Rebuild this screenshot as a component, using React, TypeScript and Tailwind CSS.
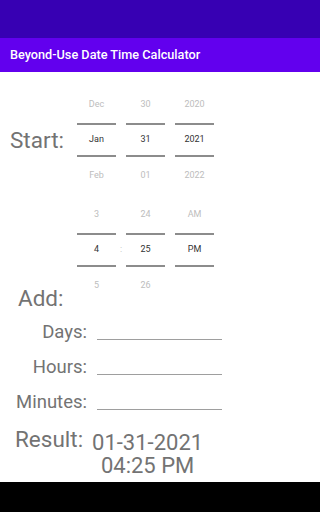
const DATE_COLS = [
  ['Dec', 'Jan', 'Feb'],
  ['30', '31', '01'],
  ['2020', '2021', '2022'],
];

const TIME_COLS = [
  ['3', '4', '5'],
  ['24', '25', '26'],
  ['AM', 'PM', ''],
];

function Wheel({ items }: { items: string[] }) {
  return (
    <div className="flex w-[39px] flex-col text-[9px]">
      <div className="flex h-[37px] items-center justify-center text-[#bdbdbd]">{items[0]}</div>
      <div className="flex h-[34px] items-center justify-center border-y-2 border-[#8c8c8c] text-[#333333]">
        {items[1]}
      </div>
      <div className="flex h-[37px] items-center justify-center text-[#bdbdbd]">{items[2]}</div>
    </div>
  );
}

function Picker({ cols, sep }: { cols: string[][]; sep?: string }) {
  return (
    <div className="flex">
      <Wheel items={cols[0]} />
      <div className="flex w-[10px] items-center justify-center text-[9px] text-[#bdbdbd]">{sep}</div>
      <Wheel items={cols[1]} />
      <div className="w-[10px]" />
      <Wheel items={cols[2]} />
    </div>
  );
}

function Field({ label }: { label: string }) {
  return (
    <div className="flex items-end">
      <span className="w-[87px] text-right text-[18.5px] leading-[22px]">{label}</span>
      <div className="mb-[3px] ml-[10px] h-px w-[125px] bg-[#9e9e9e]" />
    </div>
  );
}

export default function App() {
  return (
    <div className="flex h-[512px] w-full flex-col bg-white font-['Roboto',sans-serif] text-[#737373]">
      <div className="h-[38px] bg-[#3700b3]" />
      <div className="flex h-[34px] items-center bg-[#6200ee] px-[10px]">
        <h1 className="text-[12.7px] font-medium text-white">Beyond-Use Date Time Calculator</h1>
      </div>

      <div className="flex flex-1 flex-col">
        {/* Start date */}
        <div className="mt-[14px] flex items-center">
          <span className="w-[77px] pl-[10px] text-[22.5px] leading-[26px]">Start:</span>
          <Picker cols={DATE_COLS} />
        </div>

        {/* Start time */}
        <div className="mt-[2px] flex pl-[77px]">
          <Picker cols={TIME_COLS} sep=":" />
        </div>

        <span className="-mt-[19px] pl-[18px] text-[22.5px] leading-[26px]">Add:</span>

        <div className="mt-[10px] flex flex-col gap-[13px]">
          <Field label="Days:" />
          <Field label="Hours:" />
          <Field label="Minutes:" />
        </div>

        {/* Result */}
        <div className="mt-[13px] flex items-start">
          <span className="pl-[15px] text-[22.5px] leading-[26px]">Result:</span>
          <div className="ml-[6px] mt-[5px] w-[117px] text-center text-[22px] leading-[23px]">
            <div>01-31-2021</div>
            <div>04:25 PM</div>
          </div>
        </div>
      </div>

      <div className="h-[30px] bg-black" />
    </div>
  );
}
